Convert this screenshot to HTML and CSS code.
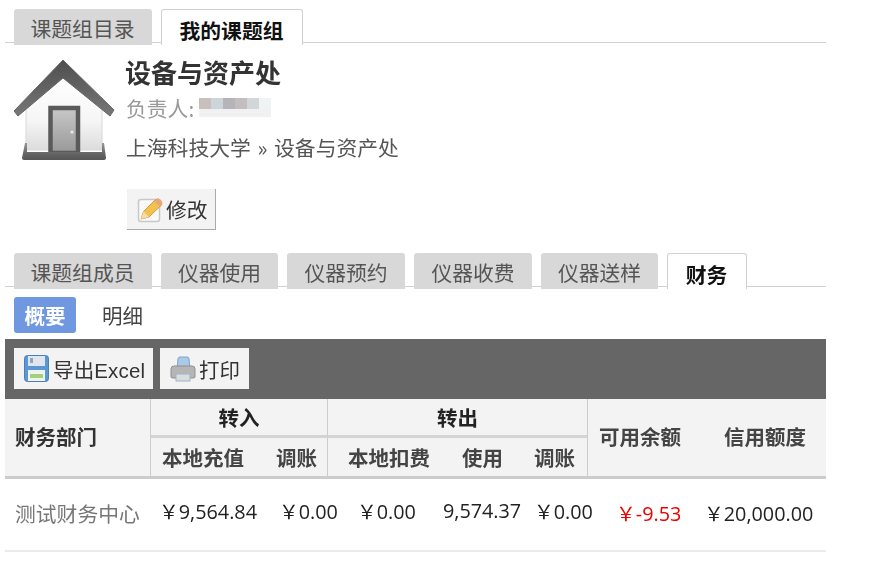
FILE: index.html
```html
<!DOCTYPE html>
<html lang="zh-CN">
<head>
<meta charset="utf-8">
<title>设备与资产处</title>
<link rel="stylesheet" href="styles.css">
</head>
<body>
<main class="page">
  <nav class="tabs tabs-top">
    <a class="tab tab-w138">课题组目录</a>
    <a class="tab tab-w142 active">我的课题组</a>
  </nav>

  <section class="profile">
    <svg class="house" viewBox="14 58 101 103" width="101" height="103" aria-hidden="true">
      <defs>
        <linearGradient id="wall" x1="0" y1="0" x2="0" y2="1"><stop offset="0" stop-color="#fff"/><stop offset="0.6" stop-color="#f6f6f6"/><stop offset="1" stop-color="#dcdcdc"/></linearGradient>
        <linearGradient id="roof" x1="0" y1="0" x2="0" y2="1"><stop offset="0" stop-color="#4e4e4e"/><stop offset="1" stop-color="#777"/></linearGradient>
        <linearGradient id="door" x1="0" y1="0" x2="0" y2="1"><stop offset="0" stop-color="#c8c8c8"/><stop offset="1" stop-color="#989898"/></linearGradient>
        <linearGradient id="base" x1="0" y1="0" x2="0" y2="1"><stop offset="0" stop-color="#999"/><stop offset="0.6" stop-color="#666"/><stop offset="1" stop-color="#555"/></linearGradient>
      </defs>
      <path d="M63 76 L26 108 V150 H102 V108 Z" fill="url(#wall)" stroke="#d8d8d8"/>
      <path d="M63 60 L114 110 L110 116 L63 78 L18 116 L14 111 Z" fill="url(#roof)" stroke="#666" stroke-linejoin="round"/>
      <rect x="50.5" y="108" width="27.5" height="45" fill="url(#door)" stroke="#5a5a5a" stroke-width="4.5"/>
      <circle cx="72" cy="132" r="1.6" fill="#e8e8e8"/>
      <path d="M25 143 H27 V152 H102 V143 H104 L106 158 Q106 160 103 160 H25 Q22 160 22 158 Z" fill="url(#base)"/>
    </svg>
    <div class="info">
      <h1 class="title">设备与资产处</h1>
      <p class="owner">负责人:
        <svg class="mosaic" viewBox="0 0 72 20" width="72" height="20" aria-hidden="true">
          <defs><filter id="soft"><feGaussianBlur stdDeviation="0.7"/></filter></defs>
          <g filter="url(#soft)">
            <rect x="0" y="0" width="12" height="11" fill="#c9bfbc"/>
            <rect x="12" y="0" width="12" height="11" fill="#ccd5da"/>
            <rect x="24" y="0" width="12" height="11" fill="#b4b4b9"/>
            <rect x="36" y="0" width="12" height="11" fill="#c2bdbf"/>
            <rect x="48" y="0" width="12" height="11" fill="#d2d6d8"/>
            <rect x="60" y="0" width="12" height="11" fill="#f0f3f3"/>
            <rect x="0" y="11" width="72" height="8" fill="#f1f1f1"/>
          </g>
        </svg>
      </p>
      <p class="crumb">上海科技大学 » 设备与资产处</p>
      <a class="btn btn-edit">
        <svg class="ico-edit" viewBox="0 0 26 27" width="26" height="27" aria-hidden="true">
          <rect x="1.5" y="3.5" width="21" height="22" rx="2.5" fill="#fafafa" stroke="#c8c8c8" stroke-width="1.5"/>
          <path d="M4 23 L6.5 15.5 L19 3 L25 8.5 L12 21 Z" fill="#f2c14e" stroke="#d39a3a"/>
          <path d="M4 23 L6.5 15.5 L12 21 Z" fill="#f3dcb0"/>
          <path d="M17 5 L23 10.5 L25.5 8 Q25.5 4 21 2 Z" fill="#e8a67c"/>
        </svg>
        修改
      </a>
    </div>
  </section>

  <nav class="tabs tabs-sub">
    <a class="tab tab-w138">课题组成员</a>
    <a class="tab tab-w117">仪器使用</a>
    <a class="tab tab-w118">仪器预约</a>
    <a class="tab tab-w118">仪器收费</a>
    <a class="tab tab-w117">仪器送样</a>
    <a class="tab tab-w80 active">财务</a>
  </nav>

  <div class="pills">
    <a class="pill on">概要</a>
    <a class="pill">明细</a>
  </div>

  <div class="toolbar">
    <a class="btn btn-tool btn-excel">
      <svg viewBox="0 0 25 27" width="25" height="27" aria-hidden="true">
        <rect x="0.5" y="0.5" width="24" height="26" rx="3" fill="#5b97d5" stroke="#4a7fb8"/>
        <rect x="4" y="1" width="17" height="10" fill="#dfe6ee"/>
        <rect x="6" y="3" width="3" height="5" fill="#8fa5bd"/>
        <rect x="4" y="15" width="17" height="11" fill="#eef3ee"/>
        <rect x="6" y="19" width="13" height="4" fill="#a5cf78"/>
      </svg>
      导出Excel
    </a>
    <a class="btn btn-tool btn-print">
      <svg viewBox="0 0 26 26" width="26" height="26" aria-hidden="true">
        <path d="M7 14 L8 3 Q8 1 10 1 H17 Q19 1 19 3 L20 14 Z" fill="#a9cbe9" stroke="#7fa3c6"/>
        <path d="M1 13 Q1 10 4 10 H22 Q25 10 25 13 V21 Q25 22 23 22 H3 Q1 22 1 21 Z" fill="#b5b5b5" stroke="#8f8f8f"/>
        <rect x="6" y="18" width="14" height="7" fill="#dcdcdc" stroke="#9ab6cf"/>
      </svg>
      打印
    </a>
  </div>

  <table class="grid">
    <colgroup>
      <col class="c1"><col class="c2"><col class="c3"><col class="c4"><col class="c5"><col class="c6"><col class="c7"><col class="c8">
    </colgroup>
    <thead>
      <tr class="h1">
        <th rowspan="2" class="dept">财务部门</th>
        <th colspan="2" class="group">转入</th>
        <th colspan="3" class="group">转出</th>
        <th rowspan="2" class="sep-l h-bal">可用余额</th>
        <th rowspan="2" class="h-credit">信用额度</th>
      </tr>
      <tr class="h2">
        <th class="sep-l h-in">本地充值</th>
        <th class="h-inadj">调账</th>
        <th class="sep-l h-out">本地扣费</th>
        <th class="h-use">使用</th>
        <th class="h-outadj">调账</th>
      </tr>
    </thead>
    <tbody>
      <tr>
        <td class="d-dept">测试财务中心</td>
        <td class="d-in">￥9,564.84</td>
        <td class="d-inadj">￥0.00</td>
        <td class="d-out">￥0.00</td>
        <td class="d-use">9,574.37</td>
        <td class="d-outadj">￥0.00</td>
        <td class="d-bal low">￥-9.53</td>
        <td class="d-credit">￥20,000.00</td>
      </tr>
    </tbody>
  </table>
</main>
</body>
</html>
```

FILE: styles.css
```css
* { box-sizing: border-box; }
html, body { margin: 0; padding: 0; background: #fff; }
body {
  font-family: "Noto Sans CJK SC", "Liberation Sans", sans-serif;
  font-size: 21px;
  color: #444;
}
.page { width: 821px; margin-left: 5px; filter: blur(0.3px); }

/* tabs */
.tabs {
  display: flex;
  gap: 9px;
  padding-left: 9px;
  border-bottom: 1px solid #d0d0d0;
  height: 43px;
  padding-top: 9px;
}
.tabs-sub { height: 34px; padding-top: 0; margin-top: 23px; }
.tab {
  height: 36px;
  background: #d8d8d8;
  color: #555;
  font-size: 20.8px;
  line-height: 38px;
  text-align: center;
  border-radius: 3px 3px 0 0;
  position: relative;
}
.tab.active {
  background: #fff;
  border: 1px solid #d0d0d0;
  border-bottom: 0;
  color: #111;
  font-weight: 700;
  line-height: 40px;
  text-indent: -1px;
}
.tab-w138 { width: 138px; text-indent: -1px; }
.tab-w142 { width: 142px; }
.tab-w117 { width: 117px; }
.tab-w118 { width: 118px; }
.tab-w80 { width: 80px; }

/* profile */
.profile {
  display: flex;
  gap: 10px;
  padding: 15px 0 0 9px;
}
.house { display: block; flex: none; filter: blur(0.5px); }
.title {
  margin: -4px 0 0 0;
  font-size: 26px;
  line-height: 36px;
  font-weight: 700;
  color: #333;
}
.owner {
  margin: 3px 0 0 1px;
  color: #999;
  font-size: 20.8px;
  line-height: 30px;
  display: flex;
  align-items: center;
  gap: 5px;
}
.mosaic { display: block; }
.crumb {
  margin: 9px 0 0 1px;
  color: #555;
  font-size: 20.8px;
  line-height: 30px;
  word-spacing: 2px;
}

/* buttons */
.btn {
  display: inline-flex;
  align-items: center;
  background: #f3f3f3;
  color: #333;
}
.btn-edit {
  margin: 27px 0 0 2px;
  width: 89px;
  height: 41px;
  padding-left: 10px;
  gap: 3px;
  font-size: 20.8px;
  border-right: 1px solid #aaa;
  border-bottom: 1px solid #aaa;
}
.ico-edit { flex: none; }

/* pills */
.pills {
  display: flex;
  align-items: center;
  padding: 10px 0 6px 9px;
  gap: 26px;
}
.pill {
  height: 36px;
  line-height: 36px;
  font-size: 20.5px;
  color: #444;
}
.pill.on {
  width: 62px;
  text-align: center;
  background: #6f98e0;
  color: #fff;
  font-weight: 700;
  border-radius: 3px;
}

/* toolbar */
.toolbar {
  height: 60px;
  background: #666;
  display: flex;
  gap: 7px;
  padding: 9px 0 0 9px;
}
.btn-tool {
  height: 41px;
  font-family: "Liberation Sans", "Noto Sans CJK SC", sans-serif;
  font-size: 20.5px;
  gap: 3px;
  padding-left: 10px;
}
.btn-excel { width: 139px; gap: 4px; letter-spacing: 0.15px; }
.btn-print { width: 89px; }

/* table */
.grid {
  width: 821px;
  table-layout: fixed;
  border-collapse: separate;
  border-spacing: 0;
}
.c1 { width: 145px; }
.c2 { width: 115px; }
.c3 { width: 62px; }
.c4 { width: 113px; }
.c5 { width: 85px; }
.c6 { width: 62px; }
.c7 { width: 105px; }
.c8 { width: 134px; }

.grid th {
  background: #f3f3f3;
  color: #444;
  font-size: 20.5px;
  font-weight: 700;
  text-align: left;
  padding: 0;
  white-space: nowrap;
}
.h1 th { height: 39px; }
.h2 th { height: 41px; border-bottom: 3px solid #ccc; padding-bottom: 1px; }
.grid th[rowspan] { border-bottom: 3px solid #ccc; padding-bottom: 4px; }
.grid th.group {
  text-align: center;
  color: #222;
  border-bottom: 3px solid #d4d4d4;
  border-left: 1px solid #ccc;
}
.grid th.sep-l { border-left: 1px solid #ccc; }

.grid th.dept { padding-left: 10px; color: #333; }
.grid th.h-in { padding-left: 11px; }
.grid th.h-inadj { padding-left: 11px; }
.grid th.h-out { padding-left: 20px; }
.grid th.h-use { padding-left: 22px; }
.grid th.h-outadj { padding-left: 9px; }
.grid th.h-bal { padding-left: 11px; }
.grid th.h-credit { padding-left: 32px; }

.grid td {
  height: 73px;
  padding: 0 0 8px;
  font-family: "Open Sans", "Noto Sans CJK SC", sans-serif;
  font-size: 19.8px;
  color: #222;
  white-space: nowrap;
  border-bottom: 2px solid #eaeaea;
}
.grid td.d-dept {
  padding-left: 10px;
  padding-top: 4px;
  padding-bottom: 8px;
  font-family: "Noto Sans CJK SC", sans-serif;
  font-size: 20.8px;
  color: #777;
}
.grid td.d-in { padding-left: 9px; }
.grid td.d-inadj { padding-left: 14px; }
.grid td.d-out { padding-left: 30px; }
.grid td.d-use { padding-left: 3px; }
.grid td.d-outadj { padding-left: 9px; }
.grid td.d-bal { padding-left: 29px; padding-top: 4px; }
.grid td.d-credit { padding-left: 12px; padding-top: 4px; }
.grid td.low { color: #e00; }
```
